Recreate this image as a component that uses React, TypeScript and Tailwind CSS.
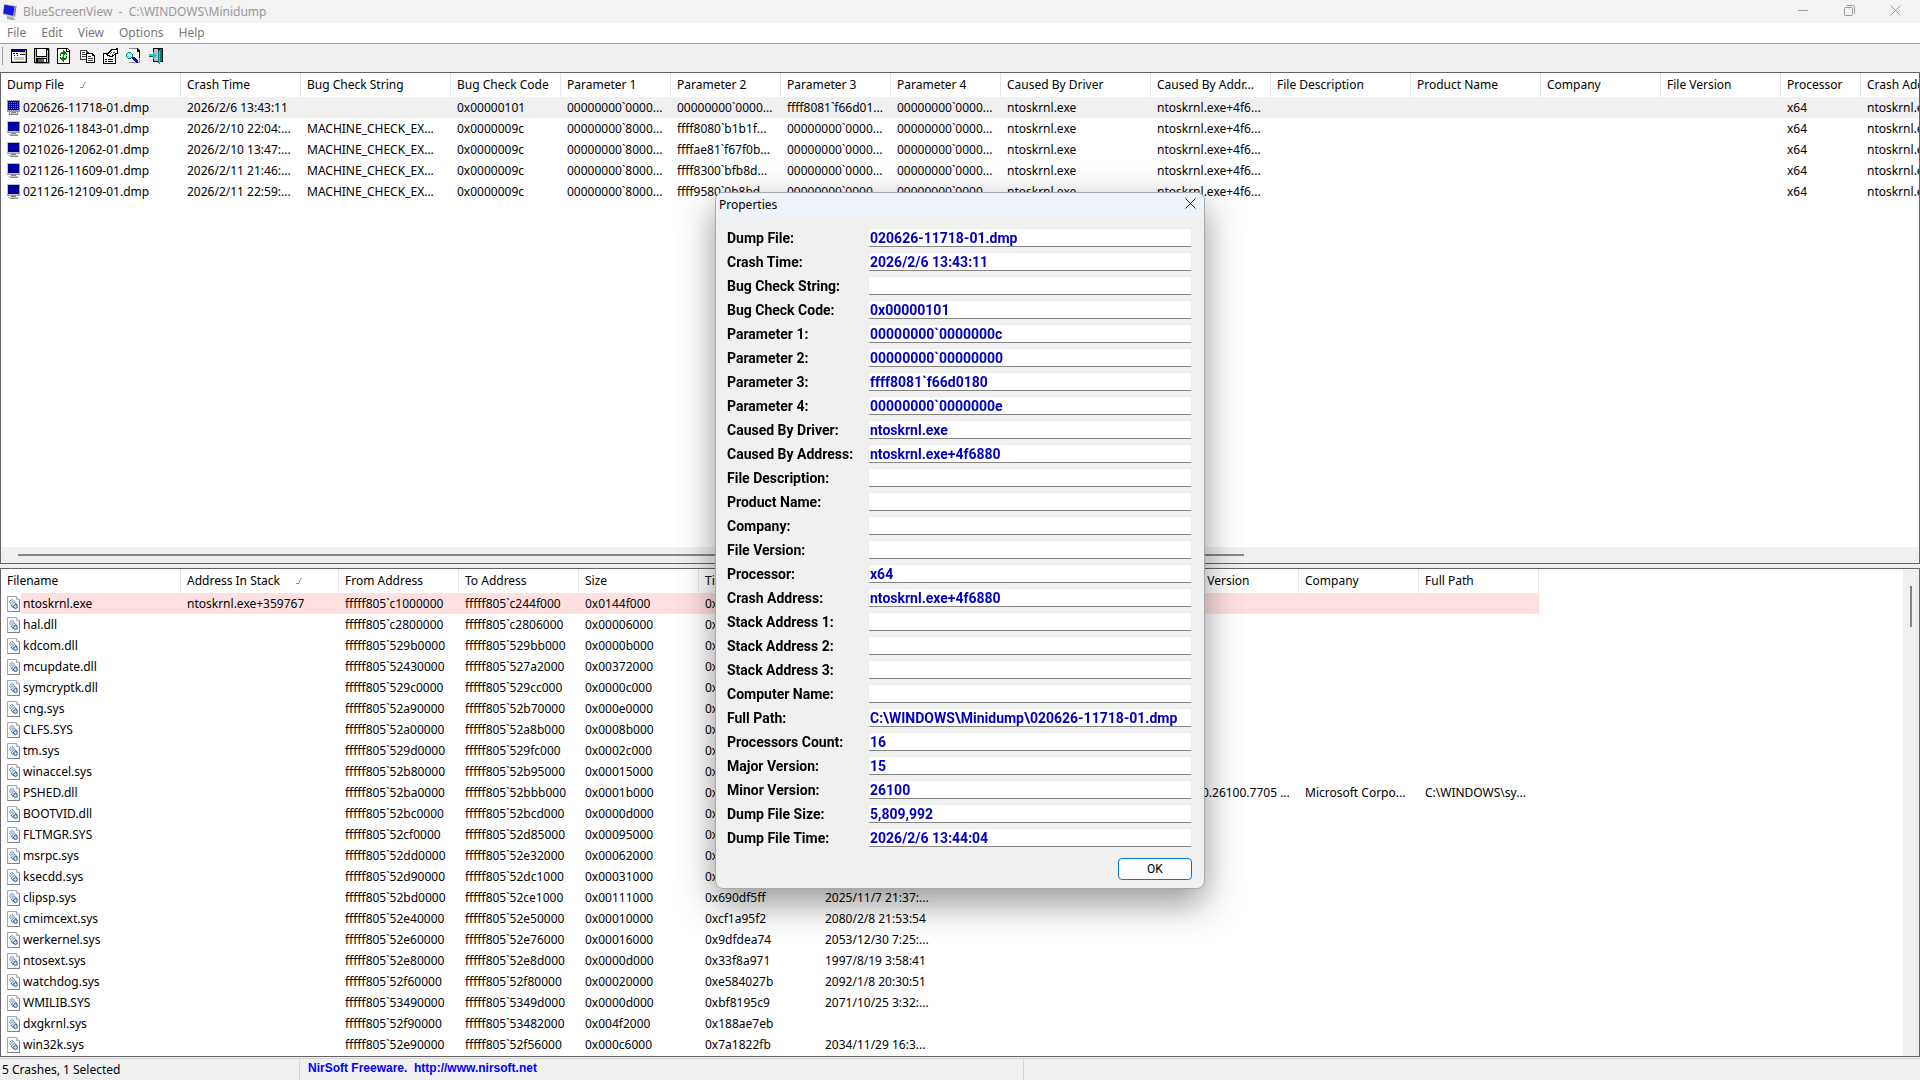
import { type ReactNode } from 'react';

type Column = { label: string; width: string; sorted?: boolean };

const crashColumns: Column[] = [
  { label: 'Dump File', width: 'w-[180px]', sorted: true },
  { label: 'Crash Time', width: 'w-[120px]' },
  { label: 'Bug Check String', width: 'w-[150px]' },
  { label: 'Bug Check Code', width: 'w-[110px]' },
  { label: 'Parameter 1', width: 'w-[110px]' },
  { label: 'Parameter 2', width: 'w-[110px]' },
  { label: 'Parameter 3', width: 'w-[110px]' },
  { label: 'Parameter 4', width: 'w-[110px]' },
  { label: 'Caused By Driver', width: 'w-[150px]' },
  { label: 'Caused By Addr...', width: 'w-[120px]' },
  { label: 'File Description', width: 'w-[140px]' },
  { label: 'Product Name', width: 'w-[130px]' },
  { label: 'Company', width: 'w-[120px]' },
  { label: 'File Version', width: 'w-[120px]' },
  { label: 'Processor', width: 'w-[80px]' },
  { label: 'Crash Address', width: 'w-[120px]' },
];

const zeros = '00000000`0000...';
const mce = 'MACHINE_CHECK_EX...';
const driver = ['ntoskrnl.exe', 'ntoskrnl.exe+4f6...', '', '', '', '', 'x64', 'ntoskrnl.exe+4f6...'];

const crashes = [
  ['020626-11718-01.dmp', '2026/2/6 13:43:11', '', '0x00000101', zeros, zeros, 'ffff8081`f66d01...', zeros, ...driver],
  ['021026-11843-01.dmp', '2026/2/10 22:04:...', mce, '0x0000009c', '00000000`8000...', 'ffff8080`b1b1f...', zeros, zeros, ...driver],
  ['021026-12062-01.dmp', '2026/2/10 13:47:...', mce, '0x0000009c', '00000000`8000...', 'ffffae81`f67f0b...', zeros, zeros, ...driver],
  ['021126-11609-01.dmp', '2026/2/11 21:46:...', mce, '0x0000009c', '00000000`8000...', 'ffff8300`bfb8d...', zeros, zeros, ...driver],
  ['021126-12109-01.dmp', '2026/2/11 22:59:...', mce, '0x0000009c', '00000000`8000...', 'ffff9580`0b8bd...', zeros, zeros, ...driver],
];

const moduleColumns: Column[] = [
  { label: 'Filename', width: 'w-[180px]' },
  { label: 'Address In Stack', width: 'w-[158px]', sorted: true },
  { label: 'From Address', width: 'w-[120px]' },
  { label: 'To Address', width: 'w-[120px]' },
  { label: 'Size', width: 'w-[120px]' },
  { label: 'Time Stamp', width: 'w-[120px]' },
  { label: 'Time String', width: 'w-[120px]' },
  { label: 'Product Name', width: 'w-[120px]' },
  { label: 'File Description', width: 'w-[120px]' },
  { label: 'File Version', width: 'w-[120px]' },
  { label: 'Company', width: 'w-[120px]' },
  { label: 'Full Path', width: 'w-[120px]' },
];

const modules = [
  ['ntoskrnl.exe', 'ntoskrnl.exe+359767', 'fffff805`c1000000', 'fffff805`c244f000', '0x0144f000', '0x'],
  ['hal.dll', '', 'fffff805`c2800000', 'fffff805`c2806000', '0x00006000', '0x'],
  ['kdcom.dll', '', 'fffff805`529b0000', 'fffff805`529bb000', '0x0000b000', '0x'],
  ['mcupdate.dll', '', 'fffff805`52430000', 'fffff805`527a2000', '0x00372000', '0x'],
  ['symcryptk.dll', '', 'fffff805`529c0000', 'fffff805`529cc000', '0x0000c000', '0x'],
  ['cng.sys', '', 'fffff805`52a90000', 'fffff805`52b70000', '0x000e0000', '0x'],
  ['CLFS.SYS', '', 'fffff805`52a00000', 'fffff805`52a8b000', '0x0008b000', '0x'],
  ['tm.sys', '', 'fffff805`529d0000', 'fffff805`529fc000', '0x0002c000', '0x'],
  ['winaccel.sys', '', 'fffff805`52b80000', 'fffff805`52b95000', '0x00015000', '0x'],
  ['PSHED.dll', '', 'fffff805`52ba0000', 'fffff805`52bbb000', '0x0001b000', '0x', '', '', '', '10.0.26100.7705 ...', 'Microsoft Corpo...', 'C:\\WINDOWS\\sy...'],
  ['BOOTVID.dll', '', 'fffff805`52bc0000', 'fffff805`52bcd000', '0x0000d000', '0x'],
  ['FLTMGR.SYS', '', 'fffff805`52cf0000', 'fffff805`52d85000', '0x00095000', '0x'],
  ['msrpc.sys', '', 'fffff805`52dd0000', 'fffff805`52e32000', '0x00062000', '0x'],
  ['ksecdd.sys', '', 'fffff805`52d90000', 'fffff805`52dc1000', '0x00031000', '0x'],
  ['clipsp.sys', '', 'fffff805`52bd0000', 'fffff805`52ce1000', '0x00111000', '0x690df5ff', '2025/11/7 21:37:...'],
  ['cmimcext.sys', '', 'fffff805`52e40000', 'fffff805`52e50000', '0x00010000', '0xcf1a95f2', '2080/2/8 21:53:54'],
  ['werkernel.sys', '', 'fffff805`52e60000', 'fffff805`52e76000', '0x00016000', '0x9dfdea74', '2053/12/30 7:25:...'],
  ['ntosext.sys', '', 'fffff805`52e80000', 'fffff805`52e8d000', '0x0000d000', '0x33f8a971', '1997/8/19 3:58:41'],
  ['watchdog.sys', '', 'fffff805`52f60000', 'fffff805`52f80000', '0x00020000', '0xe584027b', '2092/1/8 20:30:51'],
  ['WMILIB.SYS', '', 'fffff805`53490000', 'fffff805`5349d000', '0x0000d000', '0xbf8195c9', '2071/10/25 3:32:...'],
  ['dxgkrnl.sys', '', 'fffff805`52f90000', 'fffff805`53482000', '0x004f2000', '0x188ae7eb'],
  ['win32k.sys', '', 'fffff805`52e90000', 'fffff805`52f56000', '0x000c6000', '0x7a1822fb', '2034/11/29 16:3...'],
];

const properties: [string, string][] = [
  ['Dump File:', '020626-11718-01.dmp'],
  ['Crash Time:', '2026/2/6 13:43:11'],
  ['Bug Check String:', ''],
  ['Bug Check Code:', '0x00000101'],
  ['Parameter 1:', '00000000`0000000c'],
  ['Parameter 2:', '00000000`00000000'],
  ['Parameter 3:', 'ffff8081`f66d0180'],
  ['Parameter 4:', '00000000`0000000e'],
  ['Caused By Driver:', 'ntoskrnl.exe'],
  ['Caused By Address:', 'ntoskrnl.exe+4f6880'],
  ['File Description:', ''],
  ['Product Name:', ''],
  ['Company:', ''],
  ['File Version:', ''],
  ['Processor:', 'x64'],
  ['Crash Address:', 'ntoskrnl.exe+4f6880'],
  ['Stack Address 1:', ''],
  ['Stack Address 2:', ''],
  ['Stack Address 3:', ''],
  ['Computer Name:', ''],
  ['Full Path:', 'C:\\WINDOWS\\Minidump\\020626-11718-01.dmp'],
  ['Processors Count:', '16'],
  ['Major Version:', '15'],
  ['Minor Version:', '26100'],
  ['Dump File Size:', '5,809,992'],
  ['Dump File Time:', '2026/2/6 13:44:04'],
];

function Icon({ children }: { children: ReactNode }) {
  return (
    <svg viewBox="0 0 16 16" className="w-4 h-4 shrink-0" shapeRendering="crispEdges" aria-hidden="true">
      {children}
    </svg>
  );
}

function AppIcon() {
  return (
    <svg viewBox="0 0 16 16" className="w-4 h-4 shrink-0" aria-hidden="true">
      <path d="M5 12l6 1 .5 1.5 2.5.5-3 1.2-6-1.2z" fill="#a9a9a9" />
      <path d="M2 0l12.5 2L13 13 .5 10.500z" fill="#b9bccb" />
      <path d="M2.500.8l10 1.600L11.200 11.800 1.300 9.500z" fill="#1518e0" />
      <path d="M12.800 2.400l1.700-.4L13 13l-1.600-1z" fill="#8b8b93" />
    </svg>
  );
}

function MonitorIcon({ selected }: { selected?: boolean }) {
  return (
    <Icon>
      <path d="M2 0h13v11H2z" fill="#c0c0c0" />
      <path d="M2 11h13v1H2zM14 1h1v11h-1z" fill="#9a9a9a" />
      <path d="M3 1h11v9H3z" fill="#0000a0" />
      <path d="M6 12h5v1H6z" fill="#808080" />
      <path d="M3 13h11v1H3z" fill="#c8c8c8" />
      <path d="M5 14h8v1H5z" fill="#8a8a8a" />
      {selected &&
        [0, 2, 4, 6, 8, 10, 12, 14].map((y) => (
          <path
            key={y}
            d={y < 12 ? `M2 ${y}.5h13` : `M4 ${y}.5h9`}
            stroke="#3f8fe0"
            strokeDasharray="1 1"
          />
        ))}
    </Icon>
  );
}

function ModuleIcon() {
  return (
    <svg viewBox="0 0 16 16" className="w-4 h-4 shrink-0" aria-hidden="true">
      <path d="M2.500.5h9l3 3v12h-12z" fill="#fafafa" stroke="#a8a8a8" />
      <path d="M2.500 15.500h12v-12" fill="none" stroke="#808080" />
      <path d="M11.500.5v3h3" fill="#e8e8e8" stroke="#b0b0b0" />
      <circle cx="7" cy="6" r="2.200" fill="#fff" stroke="#2f639c" strokeDasharray="1.300 .5" />
      <circle cx="7" cy="6" r=".7" fill="#2f639c" />
      <circle cx="10.500" cy="10.500" r="1.900" fill="#cfe0f2" stroke="#1f5490" />
      <path d="M10 6.500l2 2.500M6 9l2.500 3" stroke="#2f639c" />
    </svg>
  );
}

const tools: { label: string; art: ReactNode }[] = [
  {
    label: 'Advanced Options',
    art: (
      <>
        <path d="M0 1h16v14H0z" fill="#000" />
        <path d="M1 2h14v12H1z" fill="#fff" />
        <path d="M1 2h13v2H1z" fill="#000080" />
        <path d="M14 2h1v12H1v-1h13z" fill="#a0a0a0" />
        <path d="M2 5h2v1H2zM5 5h2v1H5zM3 7h1v1H3zM6 7h1v1H6zM9 6h5v1H9z" fill="#000" />
        <path d="M9 4h5v1H9zM3 9h10v3H3z" fill="#c8c8c8" />
      </>
    ),
  },
  {
    label: 'Save Selected Items',
    art: (
      <>
        <path d="M1 1h15v15H1z" fill="#909090" />
        <path d="M0 0h15v15H0z" fill="#000" />
        <path d="M1 1h1v13H1zM13 2h1v12h-1z" fill="#c0c0c0" />
        <path d="M3 1h9v7H3z" fill="#fff" />
        <path d="M2 9h11v1H2z" fill="#c0c0c0" />
        <path d="M4 11h6v3H4z" fill="#606060" />
        <path d="M10 11h2v3h-2z" fill="#fff" />
      </>
    ),
  },
  {
    label: 'Refresh',
    art: (
      <>
        <path d="M0 0h10l3 3v13H0z" fill="#000" />
        <path d="M1 1h8v3h3v11H1z" fill="#fff" />
        <path d="M10 1h1v1h1v1h-2z" fill="#fff" />
        <path d="M6 2h1v1h1v1h1v1h1v2H9V6H8v1H7v1H6V6H4v2H3V5h1V4h2z" fill="#008000" />
        <path d="M7 13H6v-1H5v-1H4v-1H3V8h1v1h1V8h1V7h1v2h2V7h1v3H9v1H7z" fill="#008000" transform="translate(0 1)" />
      </>
    ),
  },
  {
    label: 'Copy Selected Items',
    art: (
      <>
        <path d="M0 2h6l3 3v7H0z" fill="#404040" />
        <path d="M1 3h5v2h2v6H1z" fill="#fff" />
        <path d="M2 4h3v1H2zM2 6h4v1H2zM2 8h4v1H2z" fill="#404040" />
        <path d="M6 5h6l3 3v7H6z" fill="#000" />
        <path d="M7 6h5v2h2v6H7z" fill="#fff" />
        <path d="M8 8h3v1H8zM8 10h5v1H8zM8 12h5v1H8z" fill="#404040" />
      </>
    ),
  },
  {
    label: 'Properties',
    art: (
      <>
        <path d="M0 5h13v11H0z" fill="#000" />
        <path d="M1 6h11v9H1z" fill="#fff" />
        <path d="M2 11h2v1H2zM5 11h5v1H5zM2 13h2v1H2zM5 13h5v1H5z" fill="#000" />
        <path d="M3 7V6h1V5h1V4h1V3h1V2h1V1h5V0h2v6h-2v1h-2v1h-1v1H6V8H4V7z" fill="#000" />
        <path d="M5 6h1V5h1V4h1V3h1V2h5v3h-2v1h-1v1H9v1H7V7H5z" fill="#fff" />
        <path d="M8 4h1v1H8zM7 5h1v1H7zM10 4h2v1h-2zM9 6h1v1H9z" fill="#606060" />
      </>
    ),
  },
  {
    label: 'Find',
    art: (
      <>
        <path d="M3 0h8l3 3v12H3z" fill="#909090" />
        <path d="M3 1h8v3h2v10H3z" fill="#fff" />
        <path d="M11 0l3 3v7h-1V4h-2z" fill="#000" />
        <path d="M2 4h3v1h1v1h1v3H6v1H5v1H2v-1H1V9H0V6h1V5h1z" fill="#008080" />
        <path d="M2 5h3v1h1v3H5v1H2V9H1V6h1z" fill="#9ff" />
        <path d="M3 6h1v1H3zM4 7h1v1H4zM2 7h1v1H2zM3 8h1v1H3z" fill="#fff" />
        <path d="M6 9h2v1h1v1h1v1h1v1h1v2h-2v-1H9v-1H8v-1H7v-1H6z" fill="#0000c8" />
        <path d="M8 9h1v1h1v1h1v1h1v1h-1v-1h-1v-1H9v-1H8z" fill="#000060" />
      </>
    ),
  },
  {
    label: 'Exit',
    art: (
      <>
        <path d="M4 0h10v14H4z" fill="#000" />
        <path d="M5 1h4v12H5z" fill="#c0c0c0" />
        <path d="M9 2h2V1h2v12h-1v1h-1v2h-1v-1H9z" fill="#008080" />
        <path d="M10 3h1v12h-1z" fill="#40c0c0" />
        <path d="M0 6h4V4h1v1h1v1h1v1h1v1H7v1H6v1H5v1H4V8H0z" fill="#00d8d8" />
        <path d="M0 8h4v1H0z" fill="#006060" />
      </>
    ),
  },
];

function CloseGlyph() {
  return (
    <svg viewBox="0 0 11 11" className="w-[11px] h-[11px]" aria-hidden="true">
      <path d="M.5.5l10 10M10.500.5l-10 10" stroke="currentColor" />
    </svg>
  );
}

function SortMark() {
  return (
    <svg viewBox="0 0 6 6" className="w-1.5 h-1.5" aria-hidden="true">
      <path d="M5 0v1L3 4.500v1H0" fill="none" stroke="#8a8a8a" />
    </svg>
  );
}

function ListView({
  columns,
  rows,
  icon,
  activeRow,
  label,
}: {
  columns: Column[];
  rows: string[][];
  icon: (row: number) => ReactNode;
  activeRow: string;
  label: string;
}) {
  return (
    <table className="table-fixed w-0 border-collapse text-left" aria-label={label}>
      <colgroup>
        {columns.map((col) => (
          <col key={col.label} className={col.width} />
        ))}
      </colgroup>
      <thead>
        <tr className="h-6">
          {columns.map((col) => (
            <th key={col.label} className="p-0 font-normal">
              <div className="flex items-center gap-4 h-6 pl-1.5 border-r border-[#e5e5e5] overflow-hidden whitespace-nowrap">
                {col.label}
                {col.sorted && <SortMark />}
              </div>
            </th>
          ))}
        </tr>
      </thead>
      <tbody>
        {rows.map((row, i) => (
          <tr key={row[0]} className="h-[21px]">
            {columns.map((col, c) => (
              <td key={col.label} className="p-0">
                {c === 0 ? (
                  <div className="flex items-center h-[21px] pl-1">
                    {icon(i)}
                    <span className={`flex-1 h-[21px] leading-[21px] pl-0.5 ${i === 0 ? activeRow : ''}`}>{row[0]}</span>
                  </div>
                ) : (
                  <div className={`h-[21px] leading-[21px] pl-1.5 overflow-hidden whitespace-nowrap ${i === 0 ? activeRow : ''}`}>
                    {row[c]}
                  </div>
                )}
              </td>
            ))}
          </tr>
        ))}
      </tbody>
    </table>
  );
}

function PropertiesDialog() {
  return (
    <div className="fixed inset-0 flex items-center justify-center">
      <div
        role="dialog"
        aria-label="Properties"
        className="w-[490px] bg-[#f0f0f0] border border-[#a8a8a8] rounded-lg overflow-hidden shadow-[0_14px_36px_rgba(0,0,0,0.42)]"
      >
        <div className="flex items-center justify-between h-6 pl-[3px] pr-2 bg-[#eef3fa]">
          <span>Properties</span>
          <button type="button" aria-label="Close" className="pb-0.5 text-[#222]">
            <CloseGlyph />
          </button>
        </div>
        <form className="pl-[11px] pr-3 pt-[9px] pb-2">
          {properties.map(([label, value], i) => (
            <div key={label} className="flex items-center h-6 font-['Roboto','Liberation_Sans',sans-serif] text-sm font-bold">
              <label htmlFor={`prop-${i}`} className="w-[141px] shrink-0">
                {label}
              </label>
              <input
                id={`prop-${i}`}
                type="text"
                readOnly
                value={value}
                className="flex-1 min-w-0 h-[19px] px-px bg-white border border-[#ececec] border-b-[#858585] rounded-xs text-[#0000c0] outline-none"
              />
            </div>
          ))}
          <div className="flex justify-end mt-2">
            <button
              type="button"
              className="w-[74px] h-[22px] bg-[#fdfdfd] border border-[#0078d4] rounded font-['Roboto','Liberation_Sans',sans-serif]"
            >
              OK
            </button>
          </div>
        </form>
      </div>
    </div>
  );
}

export default function App() {
  return (
    <div className="flex flex-col h-screen overflow-hidden bg-[#f0f0f0] font-['Noto_Sans','Noto_Sans_CJK_SC',sans-serif] text-xs text-black">
      {/* Title bar */}
      <header className="flex items-center h-[23px] shrink-0 pl-0.5 bg-[#f3f3f3] text-[#999]">
        <AppIcon />
        <h1 className="flex-1 pl-[5px] whitespace-pre">BlueScreenView  -  C:\WINDOWS\Minidump</h1>
        <div className="flex self-start pr-0.5">
          <button type="button" aria-label="Minimize" className="flex items-center justify-center w-[46px] h-[21px]">
            <svg viewBox="0 0 11 11" className="w-[11px] h-[11px]">
              <path d="M0 5.500h10" stroke="currentColor" />
            </svg>
          </button>
          <button type="button" aria-label="Restore" className="flex items-center justify-center w-[46px] h-[21px]">
            <svg viewBox="0 0 11 11" className="w-[11px] h-[11px]" fill="none" stroke="currentColor">
              <rect x=".5" y="2.500" width="8" height="8" rx="1" />
              <path d="M2.500.5h6a2 2 0 0 1 2 2v6" />
            </svg>
          </button>
          <button type="button" aria-label="Close" className="flex items-center justify-center w-[46px] h-[21px]">
            <CloseGlyph />
          </button>
        </div>
      </header>

      {/* Menu */}
      <nav className="flex items-center gap-px h-5 shrink-0 bg-white text-[#777]">
        {['File', 'Edit', 'View', 'Options', 'Help'].map((item) => (
          <button key={item} type="button" className="px-[7px]">
            {item}
          </button>
        ))}
      </nav>

      {/* Toolbar */}
      <div role="toolbar" className="flex items-center gap-[7px] h-[29px] shrink-0 border-t border-[#a0a0a0] pl-0.5 pb-2">
        <span className="w-px h-[18px] mt-1 mr-px bg-[#a0a0a0]" />
        {tools.map((tool) => (
          <button key={tool.label} type="button" aria-label={tool.label} className="mt-1">
            <Icon>{tool.art}</Icon>
          </button>
        ))}
      </div>

      {/* Crash list */}
      <section className="flex flex-col flex-[492] min-h-0 mb-1 bg-white border border-[#646464]">
        <div className="flex-1 min-h-0 overflow-hidden">
          <ListView
            label="Crashes"
            columns={crashColumns}
            rows={crashes}
            icon={(row) => <MonitorIcon selected={row === 0} />}
            activeRow="bg-[#f0f0f0]"
          />
        </div>
        <div className="flex items-center h-4 shrink-0 bg-[#f0f0f0] pl-[17px]">
          <div className="flex-[1226] h-0.5 bg-[#858585]" />
          <div className="flex-[675]" />
        </div>
      </section>

      {/* Loaded modules of the selected crash */}
      <section className="flex flex-[489] min-h-0 bg-white border border-[#646464]">
        <div className="flex-1 min-w-0 overflow-hidden">
          <ListView
            label="Drivers"
            columns={moduleColumns}
            rows={modules}
            icon={() => <ModuleIcon />}
            activeRow="bg-[#ffe0e0]"
          />
        </div>
        <div className="flex justify-center w-4 shrink-0 pt-[17px] bg-[#f0f0f0]">
          <div className="w-0.5 h-[41px] bg-[#858585]" />
        </div>
      </section>

      {/* Status bar */}
      <footer className="flex h-[23px] shrink-0 pt-px">
        <div className="flex flex-1 border-t border-[#d5d5d5] leading-[22px]">
          <span className="w-[300px] pl-0.5 border-r border-[#d5d5d5]">5 Crashes, 1 Selected</span>
          <span className="w-[724px] pl-2 border-r border-[#d5d5d5]">
            <a
              href="http://www.nirsoft.net"
              className="block font-['Liberation_Sans',sans-serif] leading-[19px] font-bold text-[#0000ff] whitespace-pre"
            >
              NirSoft Freeware.  http://www.nirsoft.net
            </a>
          </span>
        </div>
      </footer>

      <PropertiesDialog />
    </div>
  );
}
